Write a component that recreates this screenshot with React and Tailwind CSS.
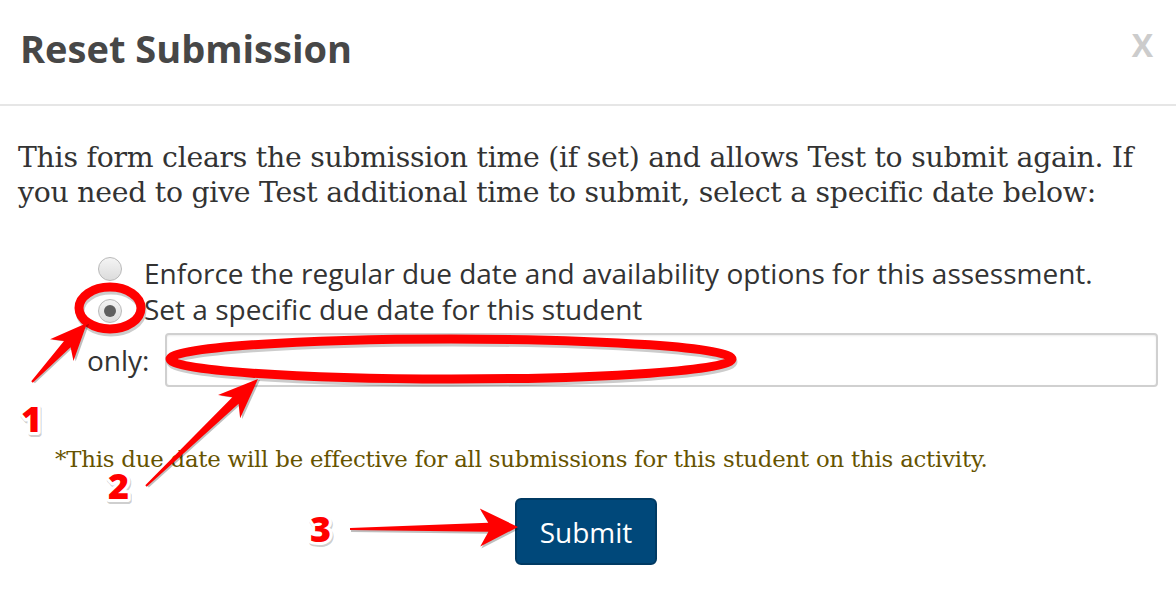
import React from 'react'

const sans = { fontFamily: '"Open Sans", "Liberation Sans", sans-serif' }
const serif = { fontFamily: '"DejaVu Serif", "Liberation Serif", serif' }

// tapered "skitch" style arrow, drawn along the x axis then rotated into place
function Arrow({ from, to, head = 36, width = 32, tail = 2, neck = 9 }) {
  const dx = to[0] - from[0]
  const dy = to[1] - from[1]
  const len = Math.sqrt(dx * dx + dy * dy)
  const angle = (Math.atan2(dy, dx) * 180) / Math.PI
  const pts = [
    [0, -tail / 2],
    [len - head * 0.78, -neck / 2],
    [len - head, -width / 2],
    [len, 0],
    [len - head, width / 2],
    [len - head * 0.78, neck / 2],
    [0, tail / 2],
  ]
    .map((p) => p.join(','))
    .join(' ')
  return (
    <g transform={`translate(${from[0]} ${from[1]}) rotate(${angle})`}>
      <polygon points={pts} fill="rgba(0,0,0,0.25)" transform="translate(1 2)" />
      <polygon points={pts} fill="#ff0000" strokeLinejoin="round" />
    </g>
  )
}

function Num({ x, y, children }) {
  return (
    <g>
      <text
        x={x + 1}
        y={y + 2}
        fontFamily='"Open Sans", sans-serif'
        fontWeight="800"
        fontSize="36"
        fill="rgba(0,0,0,0.2)"
        stroke="rgba(0,0,0,0.2)"
        strokeWidth="6"
        strokeLinejoin="round"
      >
        {children}
      </text>
      <text
        x={x}
        y={y}
        fontFamily='"Open Sans", sans-serif'
        fontWeight="800"
        fontSize="36"
        fill="#ff0000"
        stroke="#ffffff"
        strokeWidth="6"
        strokeLinejoin="round"
        paintOrder="stroke"
      >
        {children}
      </text>
    </g>
  )
}

function Annotations() {
  return (
    <svg
      className="absolute left-0 top-0 pointer-events-none"
      width="1176"
      height="596"
      viewBox="0 0 1176 596"
    >
      <ellipse cx="110" cy="309" rx="31" ry="21" fill="none" stroke="rgba(0,0,0,0.2)" strokeWidth="9" transform="translate(1 2)" />
      <ellipse cx="110" cy="308" rx="31" ry="21" fill="none" stroke="#ff0000" strokeWidth="9" />
      <ellipse cx="451" cy="360" rx="281" ry="20" fill="none" stroke="rgba(0,0,0,0.2)" strokeWidth="9" transform="translate(1 2)" />
      <ellipse cx="451" cy="359" rx="281" ry="20" fill="none" stroke="#ff0000" strokeWidth="9" />
      <Arrow from={[32, 382]} to={[87, 323]} head={37} width={32} />
      <Arrow from={[146, 486]} to={[258, 379]} head={40} width={32} />
      <Arrow from={[350, 529]} to={[518, 527]} head={38} width={38} />
      <Num x={21} y={432}>1</Num>
      <Num x={108} y={499}>2</Num>
      <Num x={310} y={542}>3</Num>
    </svg>
  )
}

function Radio({ checked }) {
  return (
    <span className="relative inline-flex h-[24px] w-[24px] shrink-0 items-center justify-center rounded-full border border-[#b9b9b9] bg-gradient-to-b from-[#f4f4f4] to-[#dcdcdc]">
      {checked && <span className="h-[12px] w-[12px] rounded-full bg-[#5f5f5f]" />}
    </span>
  )
}

export default function App() {
  return (
    <div className="relative h-[596px] w-[1176px] overflow-hidden bg-white">
      <div className="flex h-[106px] items-start justify-between border-b-2 border-[#e6e6e6] pl-[20px] pr-[23px] pt-[23px]">
        <h1 className="text-[38px] font-bold leading-[50px] text-[#474747]" style={sans}>
          Reset Submission
        </h1>
        <span className="mt-[-3px] text-[32px] font-bold leading-[50px] text-[#cccccc]" style={sans}>
          X
        </span>
      </div>

      <div className="px-[18px]">
        <p className="mt-[34px] whitespace-nowrap text-[28.3px] leading-[35px] tracking-[-0.25px] text-[#333333]" style={serif}>
          This form clears the submission time (if set) and allows Test to submit again. If
          <br />
          you need to give Test additional time to submit, select a specific date below:
        </p>

        <div className="mt-[45px] pl-[69px] text-[28px] leading-[36px] text-[#333333]" style={sans}>
          <div className="flex items-center">
            <span className="ml-[11px] mt-[-6px]">
              <Radio />
            </span>
            <span className="ml-[22px]">Enforce the regular due date and availability options for this assessment.</span>
          </div>
          <div className="flex items-center">
            <span className="ml-[11px] mt-[-6px]">
              <Radio checked />
            </span>
            <span className="ml-[22px]">Set a specific due date for this student</span>
          </div>
          <div className="mt-[6px] flex items-center">
            <span>only:</span>
            <input
              type="text"
              className="ml-[16px] h-[54px] flex-1 rounded-[4px] border-2 border-[#d0d0d0] bg-white shadow-[inset_0_1px_2px_rgba(0,0,0,0.08)] outline-none"
            />
          </div>
        </div>

        <p className="mt-[57px] pl-[37px] whitespace-nowrap text-[22.8px] leading-[30px] tracking-[-0.2px] text-[#665300]" style={serif}>
          *This due date will be effective for all submissions for this student on this activity.
        </p>

        <div className="mt-[24px] pl-[497px]">
          <button
            className="h-[67px] w-[142px] rounded-[6px] border-2 border-[#003a63] bg-[#00487a] text-[28px] text-white"
            style={sans}
          >
            Submit
          </button>
        </div>
      </div>

      <Annotations />
    </div>
  )
}
